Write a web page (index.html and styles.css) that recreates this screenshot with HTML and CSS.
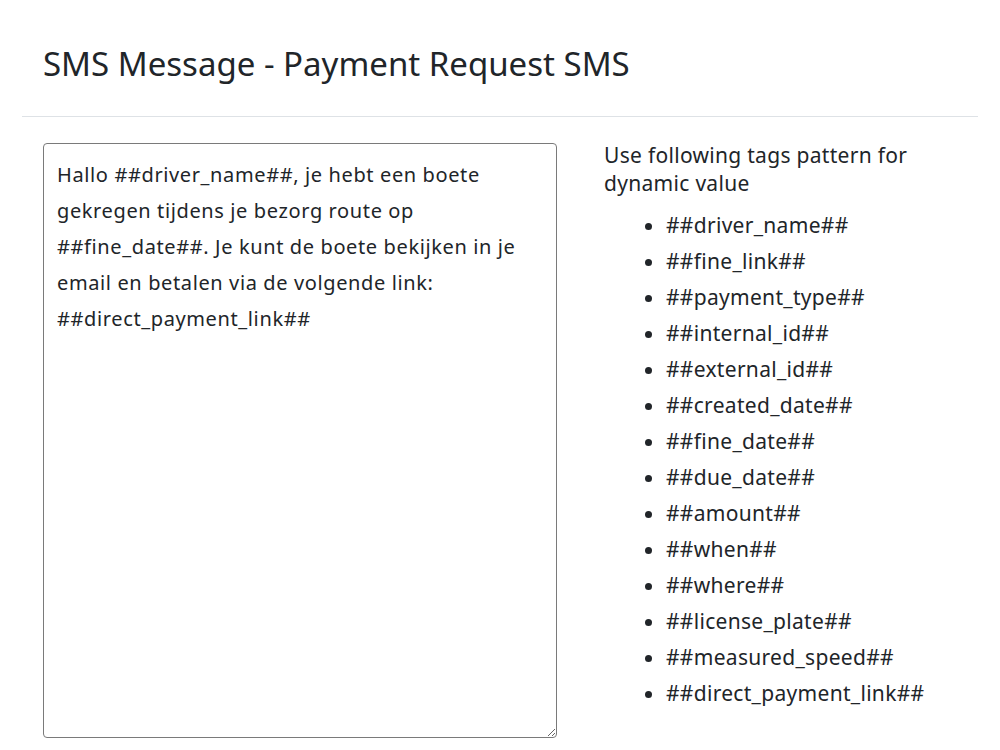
FILE: index.html
```html
<!DOCTYPE html>
<html>
<head>
<meta charset="utf-8">
<link rel="stylesheet" href="styles.css">
</head>
<body>
<div class="card">
  <div class="card-header">
    <h1 class="title">SMS Message - Payment Request SMS</h1>
  </div>
  <div class="card-body">
    <div class="editor-col">
      <textarea class="editor">Hallo ##driver_name##, je hebt een boete gekregen tijdens je bezorg route op ##fine_date##. Je kunt de boete bekijken in je email en betalen via de volgende link: ##direct_payment_link##</textarea>
    </div>
    <div class="tags-col">
      <p class="tags-intro">Use following tags pattern for dynamic value</p>
      <ul class="tags-list">
        <li>##driver_name##</li>
        <li>##fine_link##</li>
        <li>##payment_type##</li>
        <li>##internal_id##</li>
        <li>##external_id##</li>
        <li>##created_date##</li>
        <li>##fine_date##</li>
        <li>##due_date##</li>
        <li>##amount##</li>
        <li>##when##</li>
        <li>##where##</li>
        <li>##license_plate##</li>
        <li>##measured_speed##</li>
        <li>##direct_payment_link##</li>
      </ul>
    </div>
  </div>
</div>
</body>
</html>
```

FILE: styles.css
```css
html, body {
  margin: 0;
  padding: 0;
  background: #ffffff;
}
body {
  font-family: "Noto Sans", "Open Sans", sans-serif;
  color: #212529;
}
.card {
  margin: 0 22px;
}
.card-header {
  padding: 45px 21px 0;
  border-bottom: 1px solid #dee2e6;
  box-sizing: border-box;
  height: 117px;
}
.title {
  margin: 0;
  font-family: "Noto Sans", "DejaVu Sans", sans-serif;
  font-weight: 400;
  font-size: 33px;
  line-height: 38px;
  color: #212529;
}
.card-body {
  display: flex;
  padding: 26px 21px 0;
  gap: 47px;
}
.editor-col {
  width: 514px;
  flex: none;
}
.editor {
  display: block;
  width: 514px;
  height: 595px;
  box-sizing: border-box;
  border: 1px solid #7a7a7a;
  border-radius: 4px;
  padding: 13px 13px;
  font-family: "Noto Sans", "Open Sans", sans-serif;
  font-size: 20px;
  letter-spacing: 0.62px;
  line-height: 36px;
  color: #212529;
  resize: vertical;
  background: #fff;
}
.tags-col {
  flex: 1;
}
.tags-intro {
  margin: -2px 0 0;
  font-size: 21px;
  letter-spacing: 0.3px;
  line-height: 28px;
}
.tags-list {
  margin: 10px 0 0;
  padding-left: 62px;
  font-size: 21px;
  letter-spacing: 0.3px;
  line-height: 36px;
}
```
